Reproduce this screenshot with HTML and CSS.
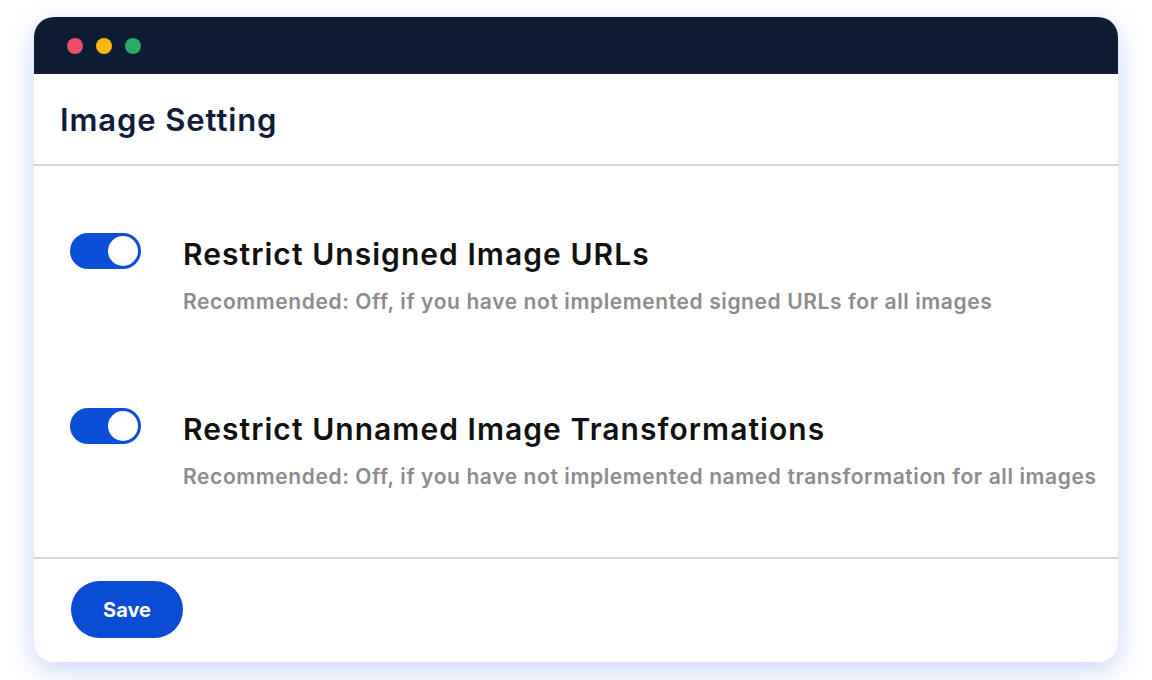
FILE: index.html
```html
<!DOCTYPE html>
<html lang="en">
<head>
    <meta charset="UTF-8">
    <meta name="viewport" content="width=device-width, initial-scale=1.0">
    <title>Image Setting</title>
    <link rel="stylesheet" href="styles.css">
</head>
<body>

    <div class="window">
        <div class="titlebar">
            <span class="dot dot-red"></span>
            <span class="dot dot-yellow"></span>
            <span class="dot dot-green"></span>
        </div>

        <div class="header">Image Setting</div>

        <!-- Opções -->
        <section class="settings">
            <div class="setting">
                <label class="toggle">
                    <input type="checkbox" checked>
                    <span class="slider"></span>
                </label>
                <div class="setting-text">
                    <div class="setting-title">Restrict Unsigned Image URLs</div>
                    <div class="setting-hint">Recommended: Off, if you have not implemented signed URLs for all images</div>
                </div>
            </div>

            <div class="setting">
                <label class="toggle">
                    <input type="checkbox" checked>
                    <span class="slider"></span>
                </label>
                <div class="setting-text">
                    <div class="setting-title">Restrict Unnamed Image Transformations</div>
                    <div class="setting-hint">Recommended: Off, if you have not implemented named transformation for all images</div>
                </div>
            </div>
        </section>

        <div class="footer">
            <button class="btn">Save</button>
        </div>
    </div>

</body>
</html>
```

FILE: styles.css
```css
body {
    margin: 0;
    padding: 17px 34px 18px;
    font-family: Inter, "Noto Sans", sans-serif;
    background-color: #ffffff;
}
.window {
    background-color: #fff;
    border-radius: 20px;
    overflow: hidden;
    box-shadow: 0 8px 28px rgba(70, 120, 230, 0.3);
}
.titlebar {
    display: flex;
    align-items: center;
    gap: 13px;
    height: 57px;
    padding-left: 33px;
    background-color: #0d1b35;
}
.dot {
    width: 16px;
    height: 16px;
    border-radius: 50%;
}
.dot-red {
    background-color: #ec4e6a;
}
.dot-yellow {
    background-color: #fbb80b;
}
.dot-green {
    background-color: #27ad6a;
}
.header {
    display: flex;
    align-items: center;
    height: 90px;
    padding-left: 26px;
    font-size: 31px;
    font-weight: 600;
    letter-spacing: 0.9px;
    color: #0f1c3a;
    border-bottom: 2px solid #d6d6d6;
}
.settings {
    display: flex;
    flex-direction: column;
    gap: 92px;
    padding: 67px 0 66px 36px;
    border-bottom: 2px solid #d6d6d6;
}
.setting {
    display: flex;
    align-items: flex-start;
    gap: 42px;
}
.toggle {
    position: relative;
    flex: none;
    width: 71px;
    height: 36px;
}
.toggle input {
    display: none;
}
.slider {
    position: absolute;
    inset: 0;
    border-radius: 18px;
    background-color: #0b4fd9;
}
.slider::after {
    content: "";
    position: absolute;
    top: 3px;
    right: 3px;
    width: 30px;
    height: 30px;
    border-radius: 50%;
    background-color: #fff;
}
.setting-text {
    white-space: nowrap;
}
.setting-title {
    font-size: 30px;
    font-weight: 600;
    letter-spacing: 1.05px;
    line-height: 42px;
    color: #111;
}
.setting-hint {
    margin-top: 13px;
    font-size: 21px;
    font-weight: 600;
    letter-spacing: 0.6px;
    line-height: 28px;
    color: #8c8c8c;
}
.footer {
    padding: 22px 37px 24px;
}
.btn {
    width: 112px;
    height: 57px;
    border: none;
    border-radius: 29px;
    background-color: #0a4dd4;
    color: #fff;
    font-family: Inter, "Noto Sans", sans-serif;
    font-size: 20px;
    font-weight: 700;
    cursor: pointer;
}
```
